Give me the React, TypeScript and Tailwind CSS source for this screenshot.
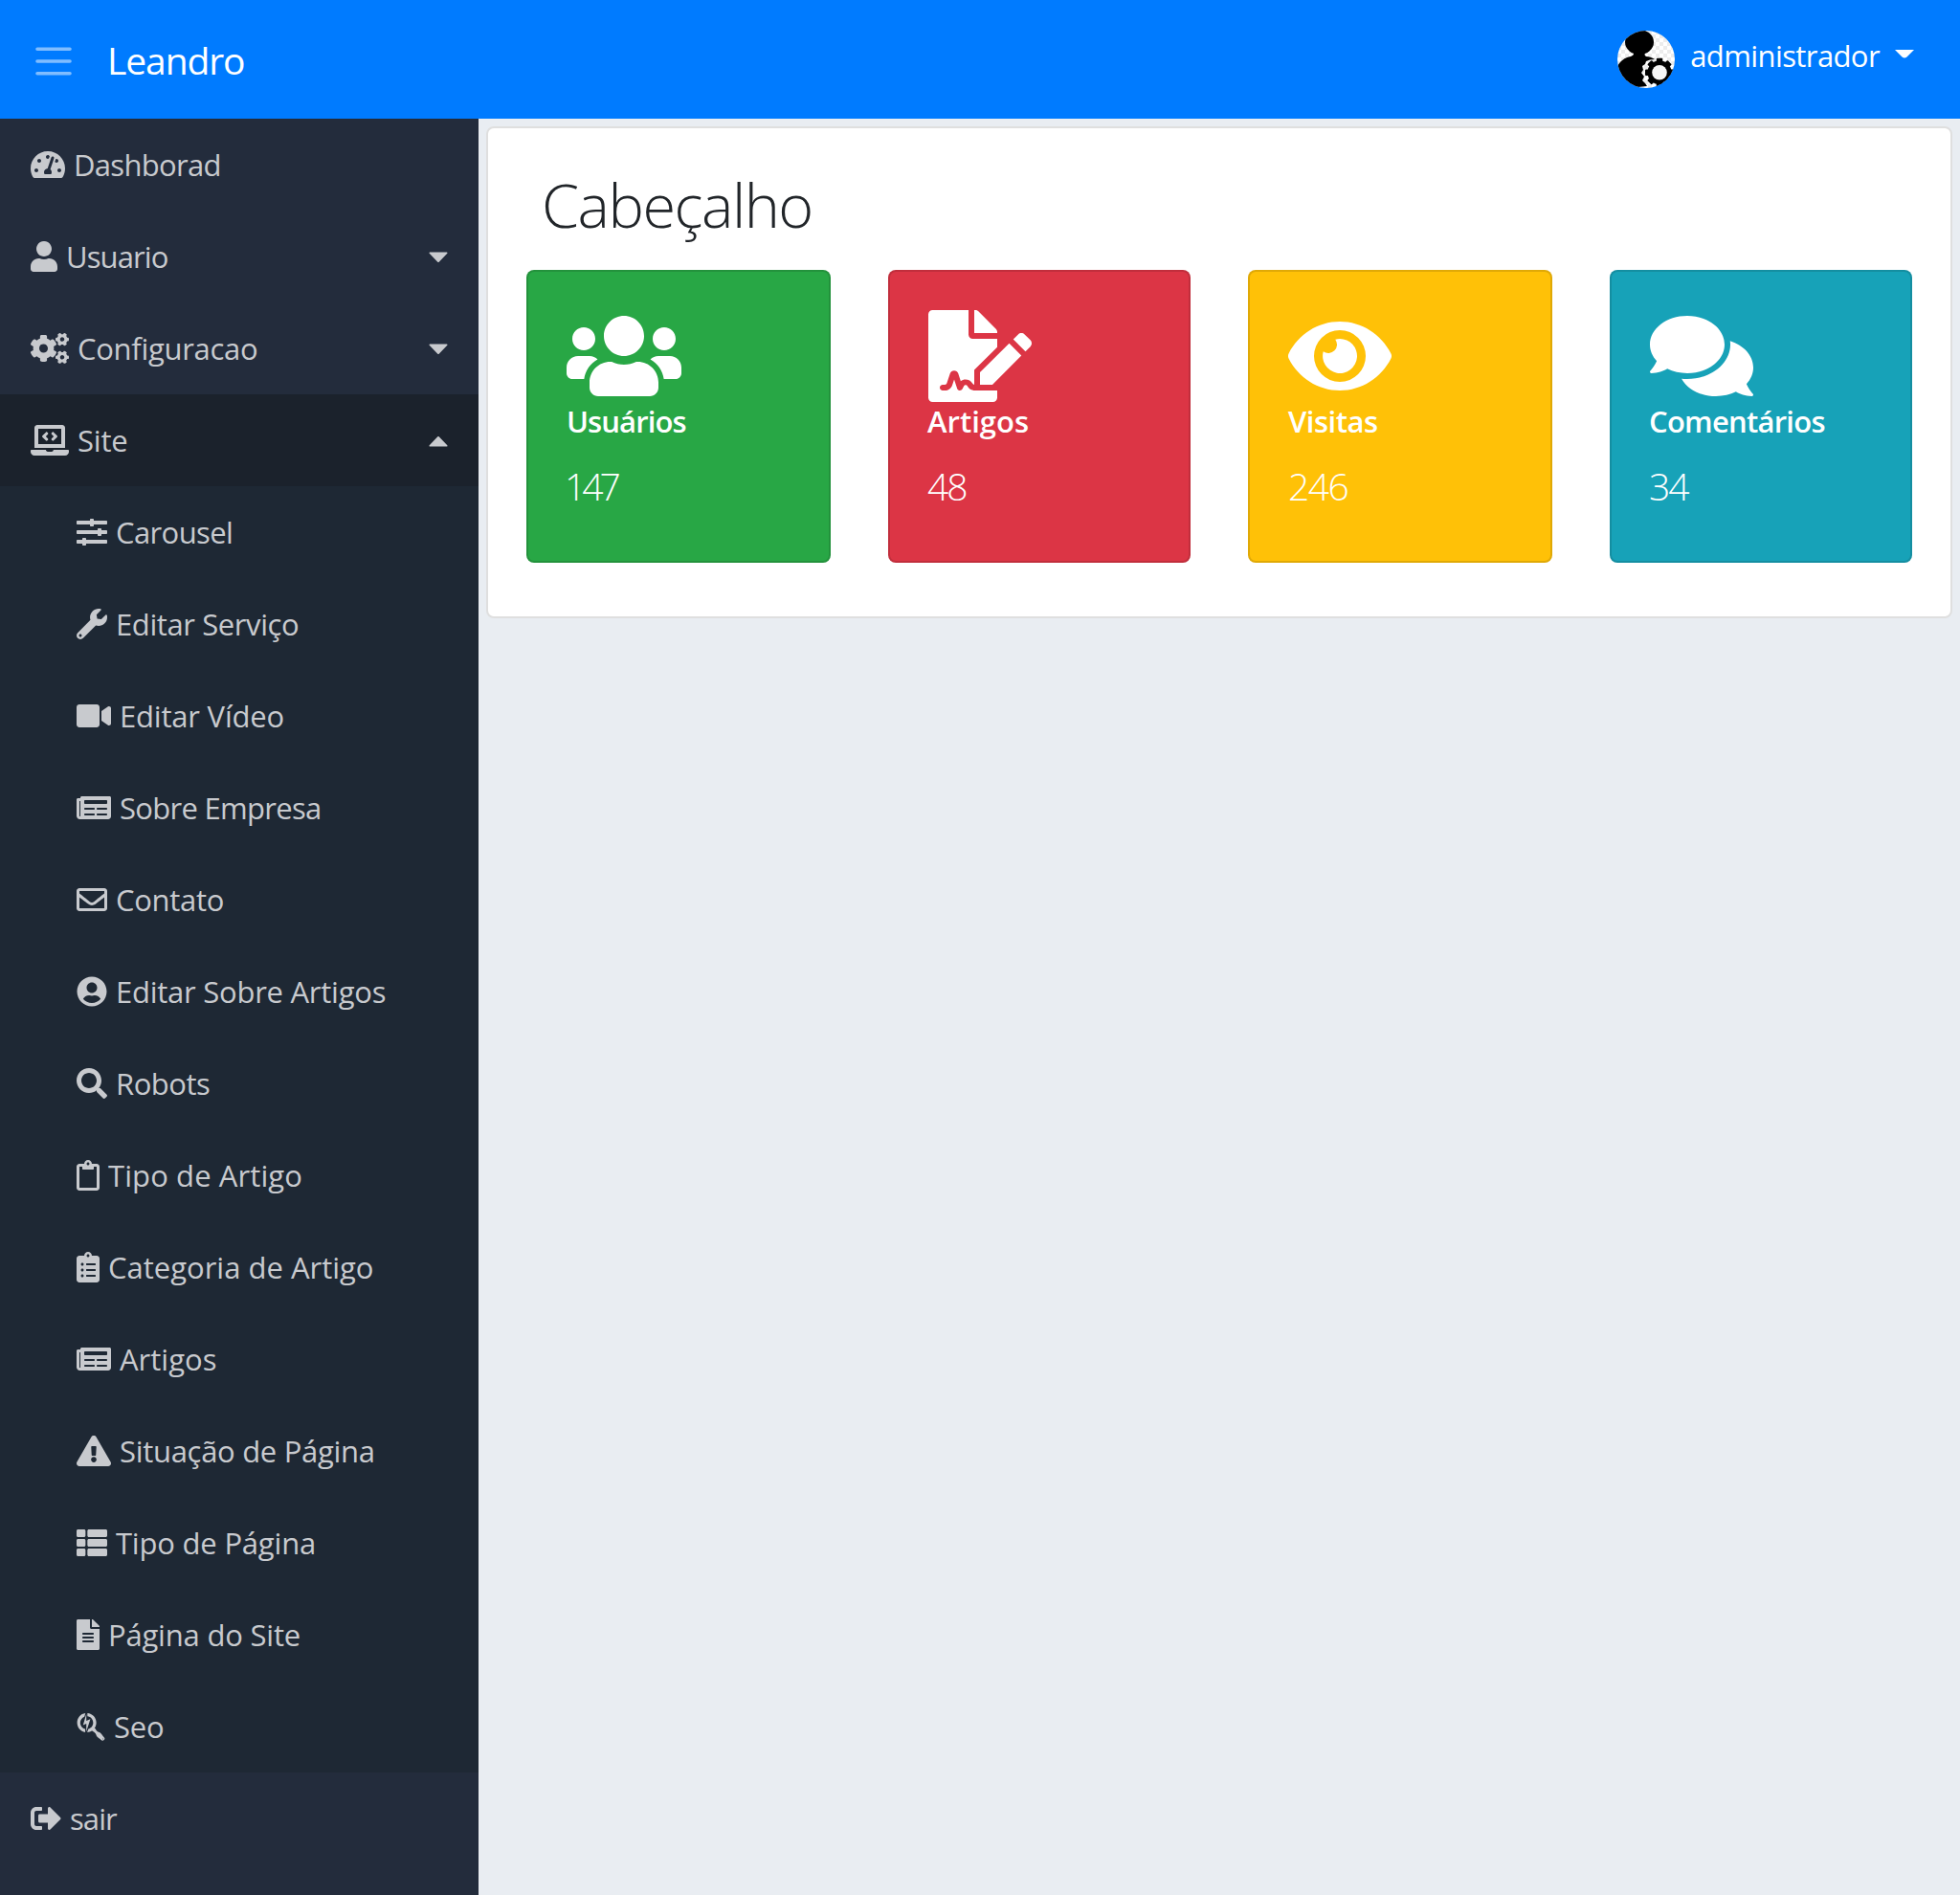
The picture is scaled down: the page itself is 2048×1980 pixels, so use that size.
import React from "react";
import {
  FaTachometerAlt, FaUser, FaCogs, FaLaptopCode, FaSlidersH, FaWrench, FaVideo, FaNewspaper,
  FaRegEnvelope, FaUserCircle, FaSearch, FaRegClipboard, FaClipboardList, FaExclamationTriangle,
  FaThList, FaFileAlt, FaSearchengin, FaSignOutAlt, FaUsers, FaFileSignature, FaEye, FaComments,
} from "react-icons/fa";

type Icon = React.ComponentType<{ className?: string }>;
// iw: icon width class, ls: label letter-spacing class
type Item = { icon: Icon; iw: string; label: string; ls: string; caret?: "down" | "up" };

const top: Item[] = [
  { icon: FaTachometerAlt, iw: "w-9", label: "Dashborad", ls: "tracking-[-0.7px]" },
  { icon: FaUser, iw: "w-7", label: "Usuario", ls: "tracking-[-0.9px]", caret: "down" },
  { icon: FaCogs, iw: "w-10", label: "Configuracao", ls: "tracking-[-0.3px]", caret: "down" },
];

const site: Item = { icon: FaLaptopCode, iw: "w-10", label: "Site", ls: "tracking-[-0.2px]", caret: "up" };
const logout: Item = { icon: FaSignOutAlt, iw: "w-8", label: "sair", ls: "tracking-[-0.9px]" };

const sub: Item[] = [
  { icon: FaSlidersH, iw: "w-8", label: "Carousel", ls: "tracking-[-0.6px]" },
  { icon: FaWrench, iw: "w-8", label: "Editar Serviço", ls: "tracking-[-0.4px]" },
  { icon: FaVideo, iw: "w-9", label: "Editar Vídeo", ls: "tracking-[-0.2px]" },
  { icon: FaNewspaper, iw: "w-9", label: "Sobre Empresa", ls: "tracking-[-0.7px]" },
  { icon: FaRegEnvelope, iw: "w-8", label: "Contato", ls: "tracking-[-0.3px]" },
  { icon: FaUserCircle, iw: "w-8", label: "Editar Sobre Artigos", ls: "tracking-[-0.25px]" },
  { icon: FaSearch, iw: "w-8", label: "Robots", ls: "tracking-[-0.5px]" },
  { icon: FaRegClipboard, iw: "w-6", label: "Tipo de Artigo", ls: "tracking-[0.1px]" },
  { icon: FaClipboardList, iw: "w-6", label: "Categoria de Artigo", ls: "tracking-[0px]" },
  { icon: FaNewspaper, iw: "w-9", label: "Artigos", ls: "tracking-[0px]" },
  { icon: FaExclamationTriangle, iw: "w-9", label: "Situação de Página", ls: "tracking-[-0.3px]" },
  { icon: FaThList, iw: "w-8", label: "Tipo de Página", ls: "tracking-[-0.2px]" },
  { icon: FaFileAlt, iw: "w-6", label: "Página do Site", ls: "tracking-[-0.2px]" },
  { icon: FaSearchengin, iw: "w-[30px]", label: "Seo", ls: "tracking-[-0.2px]" },
];

const cards = [
  { icon: FaUsers, iw: "w-[120px]", label: "Usuários", ls: "tracking-[-0.9px]", value: "147", vs: "-ml-0.5 tracking-[-4px]", bg: "bg-[#28a745]" },
  { icon: FaFileSignature, iw: "w-[108px]", label: "Artigos", ls: "-ml-px tracking-[0px]", value: "48", vs: "-ml-px tracking-[-2px]", bg: "bg-[#dc3545]" },
  { icon: FaEye, iw: "w-[108px]", label: "Visitas", ls: "tracking-[-0.5px]", value: "246", vs: "tracking-[-1.5px]", bg: "bg-[#ffc107]" },
  { icon: FaComments, iw: "w-[108px]", label: "Comentários", ls: "-ml-px tracking-[-0.75px]", value: "34", vs: "-ml-px tracking-[-2px]", bg: "bg-[#17a2b8]" },
];

function Caret({ dir }: { dir: "down" | "up" }) {
  return (
    <svg viewBox="0 0 20 12" className={`ml-auto mt-0.5 h-3 w-5 fill-current ${dir === "up" ? "rotate-180" : ""}`}>
      <path d="M1.2 0.5h17.6c.7 0 1 .8.5 1.3l-8.6 8.9c-.4.4-1 .4-1.4 0L.7 1.8C.2 1.3.500.5 1.2.5z" />
    </svg>
  );
}

function Row({ item, className = "px-8" }: { item: Item; className?: string }) {
  const I = item.icon;
  return (
    <a className={`flex h-24 items-center ${className}`}>
      <I className={`h-8 shrink-0 ${item.iw}`} />
      <span className={`ml-[9px] whitespace-nowrap text-[31px] leading-[48px] ${item.ls}`}>{item.label}</span>
      {item.caret && <Caret dir={item.caret} />}
    </a>
  );
}

function Avatar() {
  return (
    <svg viewBox="0 0 60 60" className="size-[60px] rounded-full">
      <defs>
        <pattern id="checker" width="8" height="8" patternUnits="userSpaceOnUse">
          <rect width="8" height="8" fill="#fff" />
          <rect width="4" height="4" fill="#ececec" />
          <rect x="4" y="4" width="4" height="4" fill="#ececec" />
        </pattern>
      </defs>
      <rect width="60" height="60" fill="url(#checker)" />
      <ellipse cx="23" cy="12" rx="15" ry="13" />
      <path d="M16 22h14c-2 2-2 4 0 5 3 0 6 1 9 3l-5 .5-4 1.500-1 3-3 2 1 4-2 3 3 4-2 4 3 3 2 3-12 1.200L0 60V38c2-6 8-10 14-11 3-1 4-3 2-5z" />
      <g transform="translate(44 43.700)">
        {[0, 45, 90, 135, 180, 225, 270, 315].map((a) => (
          <rect key={a} x="-3.2" y="-15" width="6.400" height="7" rx="1" transform={`rotate(${a})`} />
        ))}
        <circle r="12.500" />
        <circle r="7.8" fill="#f6f6f6" />
      </g>
    </svg>
  );
}

export default function App() {
  return (
    <div className="flex h-[1980px] w-[2048px] flex-col overflow-hidden bg-[#e9edf2] font-['Open_Sans','Noto_Sans',sans-serif]">
      <header className="flex h-[124px] shrink-0 items-center bg-[#007bff] text-white">
        <svg viewBox="0 0 38 30" className="ml-[37px] mt-1 h-[30px] w-[38px]" fill="none" stroke="#80bdff" strokeWidth="3.6" strokeLinecap="round">
          <path d="M2 2.200h34M2 15h34M2 27.800h34" />
        </svg>
        <span className="ml-[37px] mt-0.5 text-[39px] leading-[60px] tracking-[-1.1px]">Leandro</span>
        <div className="ml-auto mr-12 flex items-center">
          <Avatar />
          <span className="ml-4 -mt-2 text-[31px] leading-[48px] tracking-[-0.6px]">administrador</span>
          <svg viewBox="0 0 20 9" className="ml-4 -mt-3 h-[9px] w-5 fill-white">
            <path d="M0 0h20l-7.500 7.500q-2.500 2-5 0z" />
          </svg>
        </div>
      </header>
      <div className="flex flex-1">
        <nav className="w-[500px] shrink-0 bg-[#232c3c] text-[#c8cace]">
          {top.map((it) => <Row key={it.label} item={it} />)}
          <Row item={site} className="bg-[#1b222c] px-8" />
          <div className="bg-[#1e2834]">
            {sub.map((it) => <Row key={it.label} item={it} className="pl-20 pr-8" />)}
          </div>
          <Row item={logout} />
        </nav>
        <main className="flex-1 p-2">
          <section className="h-[514px] rounded-lg border-2 border-[#dfdfdf] bg-white px-10 pt-10">
            <h1 className="ml-4 h-[108px] text-[63px] font-light leading-[79px] tracking-[-1.5px] text-[#212529]">Cabeçalho</h1>
            <div className="grid grid-cols-[318px_316px_318px_316px] gap-[60px]">
              {cards.map(({ icon: I, iw, label, ls, value, vs, bg }) => (
                <article key={label} className={`h-[306px] rounded-lg border-2 border-black/12 px-10 pt-10 text-white ${bg}`}>
                  <I className={`h-24 ${iw}`} />
                  <h2 className={`mt-px text-[31px] font-semibold leading-[38px] ${ls}`}>{label}</h2>
                  <p className={`mt-[19px] text-[39px] font-light leading-[60px] ${vs}`}>{value}</p>
                </article>
              ))}
            </div>
          </section>
        </main>
      </div>
    </div>
  );
}
